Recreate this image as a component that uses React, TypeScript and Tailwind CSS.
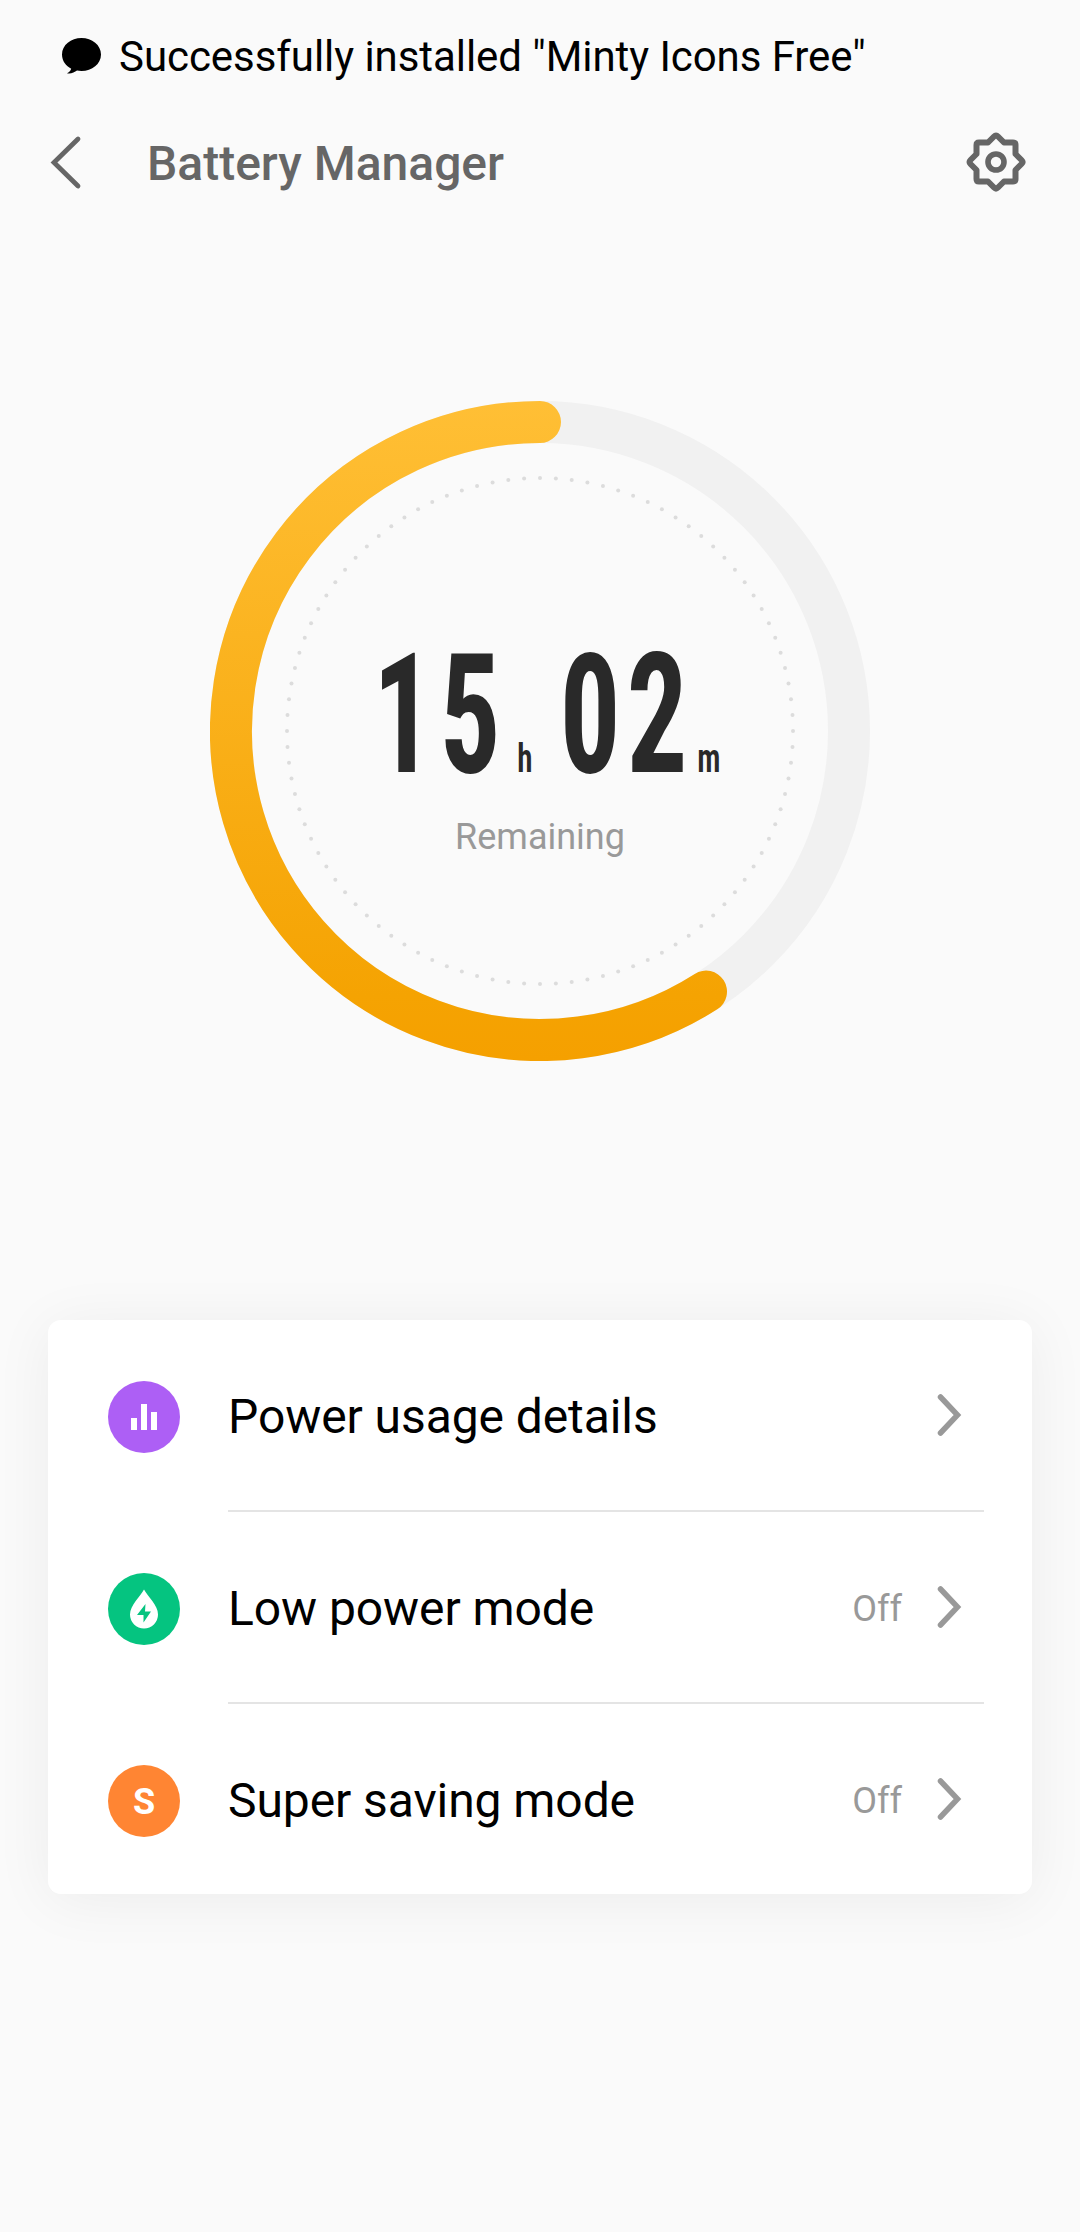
import type { ReactNode } from "react";

type Item = {
  id: string;
  label: string;
  value?: string;
  color: string;
  icon: ReactNode;
};

const ITEMS: Item[] = [
  {
    id: "usage",
    label: "Power usage details",
    color: "bg-[#ad5ff5]",
    icon: <BarsIcon />,
  },
  {
    id: "low",
    label: "Low power mode",
    value: "Off",
    color: "bg-[#05c480]",
    icon: <DropIcon />,
  },
  {
    id: "super",
    label: "Super saving mode",
    value: "Off",
    color: "bg-[#ff8533]",
    icon: <span className="pt-px text-[36px] leading-none font-bold text-white">S</span>,
  },
];

export default function App() {
  return (
    <div className="h-[2232px] w-[1080px] overflow-hidden bg-[#fafafa] font-['Roboto',sans-serif] text-black">
      {/* Status bar */}
      <div className="flex h-28 items-center gap-[18px] pl-[61px]">
        <svg width="40" height="38" viewBox="0 0 40 38">
          <path d="M20.500 1C31 1 40 8 40 17.500S31 34 20.500 34c-1.800 0-3.200-.1-4.500-.4C13.500 35.500 10 37 6 36.300c2-1 3.500-2.600 4.200-4.600C5 29 1 24 1 17.500 1 8 10 1 20.500 1Z" />
        </svg>
        <span className="pt-0.5 text-[42px] leading-none tracking-[-0.06px]">
          Successfully installed "Minty Icons Free"
        </span>
      </div>

      {/* Header */}
      <header className="flex h-[100px] items-center pr-[54px] pl-[48px] text-[#666]">
        <svg width="36" height="56" viewBox="0 0 36 56" fill="none" stroke="currentColor" strokeWidth="4.800" strokeLinecap="round">
          <path d="M30 5 6 28.500 30 52" />
        </svg>
        <h1 className="ml-[63px] flex-1 pt-[3px] text-[48px] leading-none font-medium">Battery Manager</h1>
        <GearIcon />
      </header>

      {/* Gauge */}
      <Gauge hours="15" minutes="02" />

      {/* Options */}
      <div className="mx-12 mt-[259px] rounded-[13px] bg-white shadow-[0_6px_60px_rgba(0,0,0,0.06)]">
        {ITEMS.map((item, i) => (
          <div key={item.id}>
            {i > 0 && <div className="mr-12 ml-[180px] h-0.5 bg-[#e4e4e4]" />}
            <Row item={item} />
          </div>
        ))}
      </div>
    </div>
  );
}

function Row({ item }: { item: Item }) {
  return (
    <div className="flex h-[190px] items-center pr-[68px] pl-[60px]">
      <div className={`mt-1 flex size-[72px] items-center justify-center rounded-full ${item.color}`}>
        {item.icon}
      </div>
      <span className="mt-1 ml-12 flex-1 text-[48px] leading-none tracking-[-0.08px]">{item.label}</span>
      {item.value && <span className="mt-1 mr-[32px] text-[36px] leading-none text-[#999]">{item.value}</span>}
      <svg width="30" height="48" viewBox="0 0 30 48" fill="none" stroke="#999" strokeWidth="5.500" strokeLinecap="round">
        <path d="M6.500 6 23.500 24 6.500 42" />
      </svg>
    </div>
  );
}

function Gauge({ hours, minutes }: { hours: string; minutes: string }) {
  const dots = Array.from({ length: 100 }, (_, i) => (i / 100) * 2 * Math.PI);

  return (
    <div className="relative mx-auto mt-[189px] size-[660px]">
      <svg className="size-full" viewBox="0 0 660 660" fill="none">
        <defs>
          <linearGradient id="charge" gradientUnits="userSpaceOnUse" x1="0" y1="0" x2="0" y2="660">
            <stop offset="0" stopColor="#ffbf35" />
            <stop offset="0.9" stopColor="#f5a302" />
            <stop offset="1" stopColor="#f5a000" />
          </linearGradient>
        </defs>
        <circle cx="330" cy="330" r="309" stroke="#f1f1f1" strokeWidth="42" />
        <path d="M330 21A309 309 0 1 0 496 590.600" stroke="url(#charge)" strokeWidth="42" strokeLinecap="round" />
        {dots.map((a) => (
          <circle key={a} cx={330 + 253 * Math.sin(a)} cy={330 - 253 * Math.cos(a)} r="2" fill="#dcdcdc" />
        ))}
      </svg>
      <div className="absolute inset-0 flex flex-col items-center pt-[252px]">
        <div className="ml-[17px] flex h-[119px] items-end text-[#292929]">
          <Digits value={hours} />
          <Unit label="h" className="w-[53px] pr-[11px]" />
          <Digits value={minutes} />
          <Unit label="m" className="w-[36px]" />
        </div>
        <span className="mt-[47px] text-[36px] leading-none text-[#999]">Remaining</span>
      </div>
    </div>
  );
}

function Digits({ value }: { value: string }) {
  return (
    <>
      {value.split("").map((d, i) => (
        <span key={i} className="flex w-[67px] justify-center">
          <span className="block scale-x-[0.72] text-[167px] leading-[114px] font-bold font-stretch-condensed">{d}</span>
        </span>
      ))}
    </>
  );
}

function Unit({ label, className }: { label: string; className: string }) {
  return (
    <span className={`flex justify-center ${className}`}>
      <span className="block scale-x-[0.78] text-[40px] leading-[27px] font-semibold font-stretch-condensed">
        {label}
      </span>
    </span>
  );
}

function GearIcon() {
  return (
    <svg width="60" height="60" viewBox="0 0 60 60" fill="none" stroke="currentColor" strokeWidth="6" strokeLinejoin="round">
      <path d="M28 4.500q2-2 4 0l6 6h9q2.500 0 2.500 2.500v9l6 6q2 2 0 4l-6 6v9q0 2.500-2.500 2.500h-9l-6 6q-2 2-4 0l-6-6h-9q-2.500 0-2.500-2.500v-9l-6-6q-2-2 0-4l6-6v-9q0-2.500 2.500-2.500h9Z" />
      <circle cx="30" cy="30" r="8" strokeWidth="5.600" />
    </svg>
  );
}

function BarsIcon() {
  return (
    <svg width="72" height="72" viewBox="0 0 72 72" fill="#fff">
      <path d="M23 37h6v12h-6zM33 23h6v26h-6zM43 31h6v18h-6z" />
    </svg>
  );
}

function DropIcon() {
  return (
    <svg width="72" height="72" viewBox="0 0 72 72">
      <path d="M36 16.500C40 24 50 32 50 41.500a14 14 0 0 1-28 0C22 32 32 24 36 16.500Z" fill="#fff" />
      <path d="M37.500 31 29 42h6.500V49.500L43 38.500h-6Z" fill="#05c480" />
    </svg>
  );
}
